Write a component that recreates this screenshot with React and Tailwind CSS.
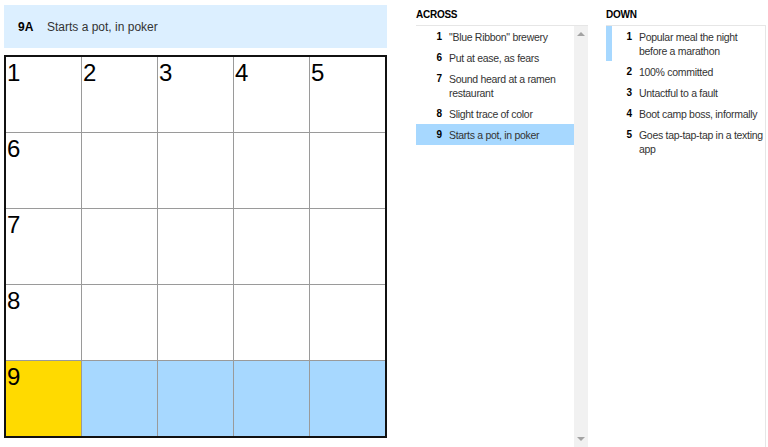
import React from "react";

const across = [
  { n: 1, text: "\"Blue Ribbon\" brewery" },
  { n: 6, text: "Put at ease, as fears" },
  { n: 7, text: "Sound heard at a ramen restaurant" },
  { n: 8, text: "Slight trace of color" },
  { n: 9, text: "Starts a pot, in poker", active: true },
];

const down = [
  { n: 1, text: "Popular meal the night before a marathon", cross: true },
  { n: 2, text: "100% committed" },
  { n: 3, text: "Untactful to a fault" },
  { n: 4, text: "Boot camp boss, informally" },
  { n: 5, text: "Goes tap-tap-tap in a texting app" },
];

const labels = { 0: 1, 1: 2, 2: 3, 3: 4, 4: 5, 5: 6, 10: 7, 15: 8, 20: 9 };

function Cell({ i }) {
  let bg = "bg-white";
  if (i === 20) bg = "bg-[#ffda00]";
  else if (i > 20) bg = "bg-[#a7d8ff]";
  return (
    <div className={`${bg} h-[75px] relative`}>
      {labels[i] && (
        <span className="absolute left-[1px] top-[4px] text-[24px] leading-none text-black">
          {labels[i]}
        </span>
      )}
    </div>
  );
}

function ClueList({ title, clues, wide }) {
  return (
    <div className={`flex flex-col h-[447px] ${wide ? "w-[172px]" : "w-[160px]"}`}>
      <div className="h-[25px] pt-[3px] flex items-center text-[10px] font-bold text-black tracking-tight">
        {title}
      </div>
      <div className={`flex flex-1 border-t border-[#e6e6e6] ${wide ? "" : "border-r"}`}>
        <ul className="flex-1">
          {clues.map((c) => (
            <li
              key={c.n}
              className={`flex py-[3.5px] border-l-[6px] ${
                c.active ? "bg-[#a7d8ff] border-[#a7d8ff]" : c.cross ? "border-[#a7d8ff]" : "border-transparent"
              }`}
            >
              <span className="w-[20px] shrink-0 text-right text-[10px] font-bold leading-[14px] text-black">
                {c.n}
              </span>
              <span className="pl-[7px] pr-[2px] text-[10.5px] tracking-[-0.3px] leading-[14px] text-[#333]">
                {c.text}
              </span>
            </li>
          ))}
        </ul>
        {wide && (
          <div className="w-[14px] bg-[#f1f1f1] flex flex-col justify-between items-center py-[6px]">
            <span className="w-0 h-0 border-x-[4px] border-x-transparent border-b-[4px] border-b-[#a3a3a3]" />
            <span className="w-0 h-0 border-x-[4px] border-x-transparent border-t-[4px] border-t-[#a3a3a3]" />
          </div>
        )}
      </div>
    </div>
  );
}

export default function App() {
  return (
    <div
      className="flex w-[768px] h-[447px] bg-white overflow-hidden"
      style={{ fontFamily: "'Liberation Sans', Arial, sans-serif" }}
    >
      <div className="flex flex-col pl-[4px] pt-[5px] w-[387px]">
        <div className="h-[43px] bg-[#dcefff] flex items-center pl-[14px] text-[12px]">
          <span className="font-bold text-black w-[29px]">9A</span>
          <span className="text-[#333]">Starts a pot, in poker</span>
        </div>
        <div className="mt-[7px] border-2 border-[#111] grid grid-cols-5 gap-px bg-[#9a9a9a] w-[383px]">
          {Array.from({ length: 25 }, (_, i) => (
            <Cell key={i} i={i} />
          ))}
        </div>
      </div>
      <div className="ml-[29px]">
        <ClueList title="ACROSS" clues={across} wide />
      </div>
      <div className="ml-[18px]">
        <ClueList title="DOWN" clues={down} />
      </div>
    </div>
  );
}
